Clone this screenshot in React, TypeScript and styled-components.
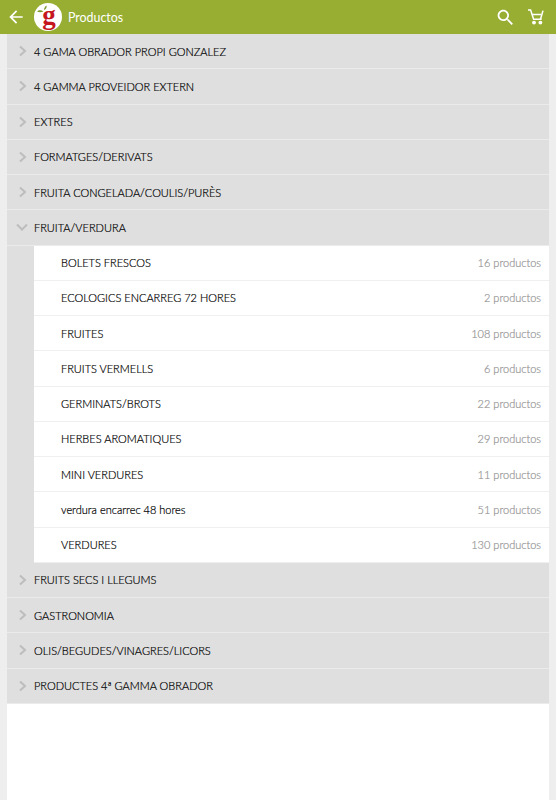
import React from 'react';
import styled, { createGlobalStyle } from 'styled-components';

const GlobalStyle = createGlobalStyle`
  html, body { margin: 0; padding: 0; height: 100%; background: #eeeeee; }
  body { font-family: Lato, "Open Sans", sans-serif; }
  #root { height: 100%; }
`;

const Page = styled.div`
  width: 556px;
  height: 800px;
  display: flex;
  flex-direction: column;
  overflow: hidden;
`;

const Toolbar = styled.header`
  height: 34px;
  flex: none;
  display: flex;
  align-items: center;
  background: #97ae32;
  color: #fff;
  padding: 0 12px 0 6px;
`;

const BackButton = styled.svg`
  width: 20px;
  height: 20px;
  flex: none;
  margin-right: 8px;
  fill: currentColor;
`;

const Logo = styled.div`
  position: relative;
  width: 28px;
  height: 28px;
  flex: none;
  margin-right: 6px;
  border-radius: 50%;
  background: #fff;
  display: flex;
  justify-content: center;
`;

const LogoLetter = styled.span`
  font-family: "Liberation Serif", serif;
  font-weight: 700;
  font-size: 27px;
  line-height: 24px;
  color: #c5161d;
  padding-left: 2px;
`;

const LogoLeaf = styled.svg`
  position: absolute;
  left: 0;
  top: 0;
  width: 28px;
  height: 28px;
`;

const Title = styled.h1`
  margin: 0;
  flex: 1;
  font-size: 12.4px;
  font-weight: 400;
`;

const ToolIcons = styled.div`
  display: flex;
  align-items: center;
  gap: 12px;
`;

const SearchIcon = styled.svg`
  width: 21px;
  height: 21px;
  fill: currentColor;
`;

const CartIcon = styled.svg`
  width: 16px;
  height: 16px;
  fill: none;
  stroke: currentColor;
  stroke-width: 1.5;
`;

const List = styled.main`
  flex: 1;
  margin: 0 7px;
  background: #fff;
`;

const CategoryRow = styled.div`
  height: 34.25px;
  border-bottom: 1px solid #ebebeb;
  background: #dfdfdf;
  display: flex;
  align-items: center;
  font-size: 11px;
  font-weight: 300;
  color: #000;
  -webkit-text-stroke: 0.2px #000;
`;

const Chevron = styled.svg`
  width: 27px;
  height: 16px;
  flex: none;
  fill: none;
  stroke: #bdbdbd;
  stroke-width: 2;
`;

const SubList = styled.div`
  background: #dfdfdf;
  padding-left: 27px;
`;

const SubRow = styled.div`
  height: 34.25px;
  border-bottom: 1px solid #efefef;
  background: #fff;
  display: flex;
  align-items: center;
  justify-content: space-between;
  padding: 0 8px 0 27px;
  font-size: 11px;
  font-weight: 300;
  color: #000;
  -webkit-text-stroke: 0.2px #000;
`;

const Count = styled.span`
  color: #8f8f8f;
  -webkit-text-stroke: 0.2px #9a9a9a;
`;

const before = [
  '4 GAMA OBRADOR PROPI GONZALEZ',
  '4 GAMMA PROVEIDOR EXTERN',
  'EXTRES',
  'FORMATGES/DERIVATS',
  'FRUITA CONGELADA/COULIS/PURÈS',
];

const subs: [string, number][] = [
  ['BOLETS FRESCOS', 16],
  ['ECOLOGICS ENCARREG 72 HORES', 2],
  ['FRUITES', 108],
  ['FRUITS VERMELLS', 6],
  ['GERMINATS/BROTS', 22],
  ['HERBES AROMATIQUES', 29],
  ['MINI VERDURES', 11],
  ['verdura encarrec 48 hores', 51],
  ['VERDURES', 130],
];

const after = [
  'FRUITS SECS I LLEGUMS',
  'GASTRONOMIA',
  'OLIS/BEGUDES/VINAGRES/LICORS',
  'PRODUCTES 4ª GAMMA OBRADOR',
];

const Category = ({ name, open }: { name: string; open?: boolean }) => (
  <CategoryRow>
    <Chevron viewBox="0 0 27 16">
      {open ? <path d="M10 5.5l5 5 5-5" /> : <path d="M13 3.5l5 4.5-5 4.5" />}
    </Chevron>
    {name}
  </CategoryRow>
);

export default function App() {
  return (
    <Page>
      <GlobalStyle />
      <Toolbar>
        <BackButton viewBox="0 0 24 24">
          <path d="M20 11H7.83l5.59-5.59L12 4l-8 8 8 8 1.41-1.41L7.83 13H20v-2z" />
        </BackButton>
        <Logo>
          <LogoLetter>g</LogoLetter>
          <LogoLeaf viewBox="0 0 28 28">
            <path d="M3 8.5 C5 6.5 7.5 7 9.5 8.5 C7 9.5 5 9.5 3 8.5Z" fill="#7c9a2c" />
            <path d="M10 7 C10 5 11 3.5 12.5 2.5 C13 4.5 12 6 10 7Z" fill="#7c9a2c" />
          </LogoLeaf>
        </Logo>
        <Title>Productos</Title>
        <ToolIcons>
          <SearchIcon viewBox="0 0 24 24">
            <path d="M15.5 14h-.79l-.28-.27C15.41 12.59 16 11.11 16 9.5 16 5.91 13.09 3 9.5 3S3 5.91 3 9.5 5.91 16 9.5 16c1.61 0 3.09-.59 4.23-1.57l.27.28v.79l5 4.99L20.49 19l-4.99-5zm-6 0C7.01 14 5 11.99 5 9.5S7.01 5 9.5 5 14 7.01 14 9.5 11.99 14 9.5 14z" />
          </SearchIcon>
          <CartIcon viewBox="0 0 16 16">
            <path d="M0 1h2.6l3 9.2h8" />
            <path d="M4 5.5h9" />
            <path d="M15 1.6l-2.5 8.6" />
            <circle cx="6" cy="13.6" r="1.2" fill="currentColor" />
            <circle cx="12.4" cy="13.6" r="1.2" fill="currentColor" />
          </CartIcon>
        </ToolIcons>
      </Toolbar>
      <List>
        {before.map((name) => <Category key={name} name={name} />)}
        <Category name="FRUITA/VERDURA" open />
        <SubList>
          {subs.map(([name, count]) => (
            <SubRow key={name}>
              <span>{name}</span>
              <Count>{count} productos</Count>
            </SubRow>
          ))}
        </SubList>
        {after.map((name) => <Category key={name} name={name} />)}
      </List>
    </Page>
  );
}
